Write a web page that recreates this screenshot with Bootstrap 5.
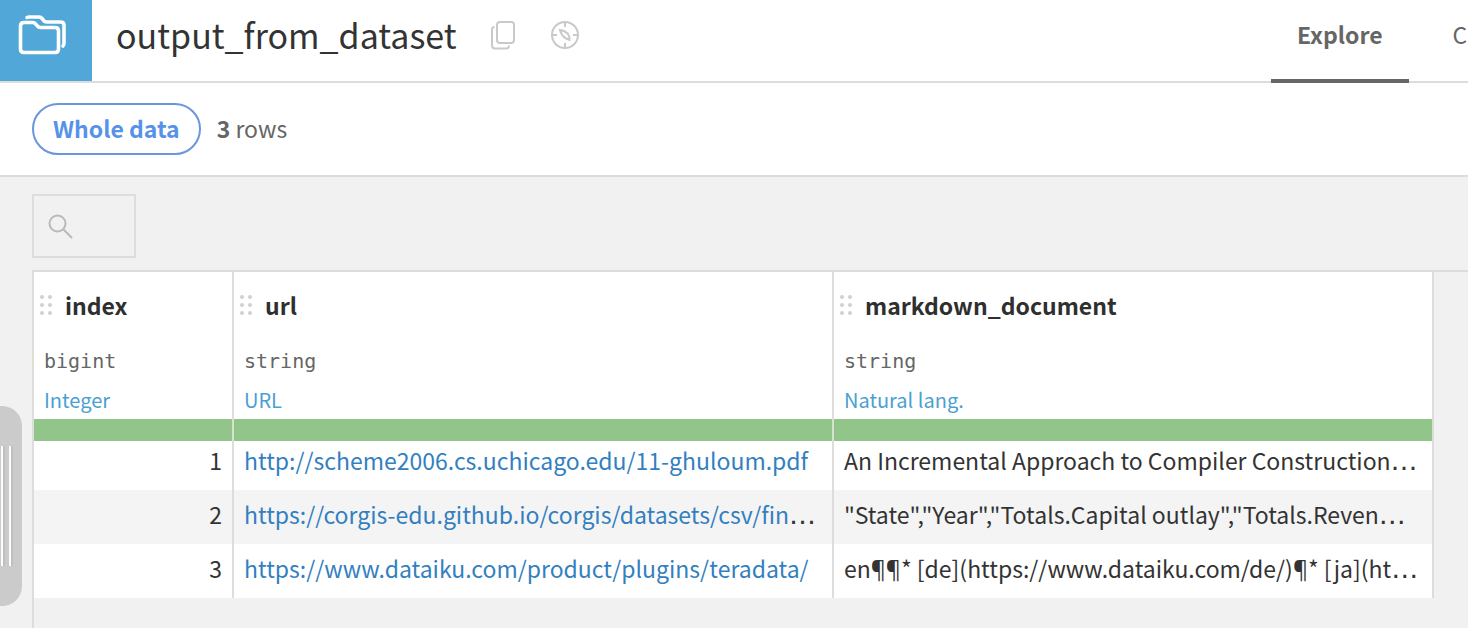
<!DOCTYPE html>
<html lang="en">
<head>
<meta charset="utf-8">
<meta name="viewport" content="width=device-width, initial-scale=1">
<title>output_from_dataset</title>
<link rel="stylesheet" href="https://cdn.jsdelivr.net/npm/bootstrap@5.3.0/dist/css/bootstrap.min.css">
<style>
  body { font-family: "Noto Sans CJK KR", "Noto Sans", sans-serif; color: #333; background: #f1f1f1; font-size: 23px; line-height: 32px; }
  .topbar { height: 83px; border-bottom: 2px solid #ddd; }
  .type-tile { width: 92px; background: #51a7d8; }
  .ds-title { font-size: 34px; line-height: 48px; font-weight: 400; }
  .title-row { padding: 0 24px 12px; gap: 33px; }
  .icon-btn { color: #c9c9c9; line-height: 1; }
  .tabs { flex: 0 0 197px; gap: 18px; margin-bottom: -2px; }
  .tabs a { color: #666; padding: 18px 26px 0; border-bottom: 4px solid transparent; }
  .tabs a.active { font-weight: 700; border-color: #666; }
  .sample-bar { height: 94px; border-bottom: 2px solid #dcdcdc; color: #666; padding: 0 32px; }
  .sample-bar span { padding-bottom: 2px; }
  .btn-sample { font-size: 23px; line-height: 30px; font-weight: 700; color: #5693e8; border: 2px solid #6a96dd; padding: 8px 19px 10px; }
  .search-box { width: 104px; height: 64px; border: 2px solid #ddd; color: #b9b9b9; padding: 0 13px; margin: 17px 0 12px 32px; }
  .search-box input { font-size: 22px; color: #333; min-width: 0; outline: 0; }
  .sheet { margin-left: 32px; border: solid #ddd; border-width: 2px 0 0 2px; min-height: calc(100vh - 270px); }
  .grid { table-layout: fixed; width: 1400px; border-collapse: separate; border-spacing: 0; background: #fff; }
  .grid th, .grid td { border-right: 2px solid #ddd; padding: 0 10px; }
  .col-name { line-height: 32px; font-weight: 700; padding: 17px 0 25px; margin-left: -5px; gap: 12px; color: #2f2f2f; }
  .storage { font: 400 20px/30px "DejaVu Sans Mono", monospace; color: #666; }
  .meaning { font-size: 20px; line-height: 28px; color: #4b9fd1; margin: 10px 0 5px; font-weight: 400; }
  .grid .quality td { height: 22px; background: #92c58a; border-color: #d5e2d2; }
  .grid .cell td { line-height: 48px; padding-bottom: 6px; }
  .grid .first-row td { line-height: 38px; padding-bottom: 11px; }
  .grid .cell:nth-child(odd) td { background: #f4f4f4; }
  .grid .cell a { color: #337fbf; }
  .sym { font-family: "Noto Sans", sans-serif; line-height: 1; }
  .dots { font-family: "DejaVu Sans", sans-serif; font-size: 27px; line-height: 1; }
  .grip { left: 0; top: 406px; width: 22px; height: 200px; border: 0; background: #cbcbcb; border-radius: 0 20px 20px 0; }
</style>
</head>
<body class="min-vh-100 overflow-hidden">
<svg class="d-none"><symbol id="drag" viewBox="0 0 14 22"><g fill="#d0d0d0"><circle cx="3" cy="3" r="2"/><circle cx="11" cy="3" r="2"/><circle cx="3" cy="11" r="2"/><circle cx="11" cy="11" r="2"/><circle cx="3" cy="19" r="2"/><circle cx="11" cy="19" r="2"/></g></symbol></svg>
<header class="topbar d-flex bg-white">
  <div class="type-tile flex-shrink-0">
    <svg class="d-block" width="92" height="81" fill="none" stroke="#fff" stroke-width="3.600" stroke-linecap="round" stroke-linejoin="round" aria-hidden="true"><path d="M20.500 49V26q0-3.500 3.500-3.500h8.500q2 0 3.500 1.800l1.500 1.800q1 1.400 3 1.400h14.500q3.500 0 3.500 3.500v18q0 3.500-3.500 3.500h-31q-3.500 0-3.500-3.500z"/><path d="M27 17.500q1-.5 2-.5h10q2 0 3.200 1.600l1.500 2q1 1.400 3 1.400h14q3.300 0 3.300 3.300V43q0 2-1 3"/></svg>
  </div>
  <div class="title-row d-flex align-items-center">
    <h1 class="ds-title m-0">output_from_dataset</h1>
    <button class="btn icon-btn p-0 border-0" aria-label="Copy name">
      <svg width="27" height="30" fill="none" stroke="currentColor" stroke-width="2"><rect x="7" y="2" width="17" height="21" rx="3"/><path d="M4.500 7Q2 7 2 9.500V25q0 3.500 3 3.500h11.500q2.500 0 2.500-3"/></svg>
    </button>
    <button class="btn icon-btn p-0 border-0" aria-label="Navigate">
      <svg width="30" height="30" fill="none" stroke="currentColor" stroke-width="2"><circle cx="15" cy="15" r="13"/><path d="M15 2v5M15 23v5M2 15h5M23 15h5M10 10q5 .5 8 4 2 3 1.500 6-4-1-7-4.500-2-3-2.500-5.500z"/></svg>
    </button>
  </div>
  <nav class="tabs d-flex ms-auto overflow-hidden">
    <a href="#" class="active text-decoration-none">Explore</a>
    <a href="#" class="text-decoration-none">Charts</a>
  </nav>
</header>
<section class="sample-bar d-flex align-items-center gap-3 bg-white">
  <button class="btn btn-sample rounded-pill">Whole data</button>
  <span><b>3</b> rows</span>
</section>
<label class="search-box d-flex align-items-center">
  <svg class="flex-shrink-0" width="26" height="26" fill="none" stroke="currentColor" stroke-width="2" aria-hidden="true"><circle cx="10.500" cy="10.500" r="8"/><path d="M16.500 16.500l8.500 8.500"/></svg>
  <input type="text" class="border-0 bg-transparent w-100 p-0" aria-label="Search">
</label>
<main class="sheet">
<table class="grid">
<colgroup><col style="width:200px"><col style="width:600px"><col style="width:600px"></colgroup>
<thead><tr>
<th><div class="col-name d-flex align-items-center"><svg width="14" height="22" aria-hidden="true"><use href="#drag"/></svg>index</div><div class="storage">bigint</div><div class="meaning">Integer</div></th>
<th><div class="col-name d-flex align-items-center"><svg width="14" height="22" aria-hidden="true"><use href="#drag"/></svg>url</div><div class="storage">string</div><div class="meaning">URL</div></th>
<th><div class="col-name d-flex align-items-center"><svg width="14" height="22" aria-hidden="true"><use href="#drag"/></svg>markdown_document</div><div class="storage">string</div><div class="meaning">Natural lang.</div></th>
</tr></thead>
<tbody>
<tr class="quality"><td></td><td></td><td></td></tr>
<tr class="cell first-row"><td class="text-end">1</td><td class="text-nowrap"><a class="text-decoration-none" href="#">http://scheme2006.cs.uchicago.edu/11-ghuloum.pdf</a></td><td class="text-nowrap">An Incremental Approach to Compiler Construction<span class="dots">…</span></td></tr>
<tr class="cell"><td class="text-end">2</td><td class="text-nowrap"><a class="text-decoration-none" href="#">https://corgis-edu.github.io/corgis/datasets/csv/fin</a><span class="dots">…</span></td><td class="text-nowrap">"State","Year","Totals.Capital outlay","Totals.Reven<span class="dots">…</span></td></tr>
<tr class="cell"><td class="text-end">3</td><td class="text-nowrap"><a class="text-decoration-none" href="#">https://www.dataiku.com/product/plugins/teradata/</a></td><td class="text-nowrap">en<span class="sym">¶¶</span>* [de](https://www.dataiku.com/de/)<span class="sym">¶</span>* [ja](ht<span class="dots">…</span></td></tr>
</tbody></table>
</main>
<button class="grip position-absolute p-0" aria-label="Open side panel"><svg class="d-block" width="22" height="200"><path d="M2 40v120M10 40v120" stroke="#fff" stroke-width="2"/><path d="M4 40v120M12 40v120" stroke="#b5b5b5"/></svg></button>
<script src="https://cdn.jsdelivr.net/npm/bootstrap@5.3.0/dist/js/bootstrap.bundle.min.js"></script>
</body>
</html>
